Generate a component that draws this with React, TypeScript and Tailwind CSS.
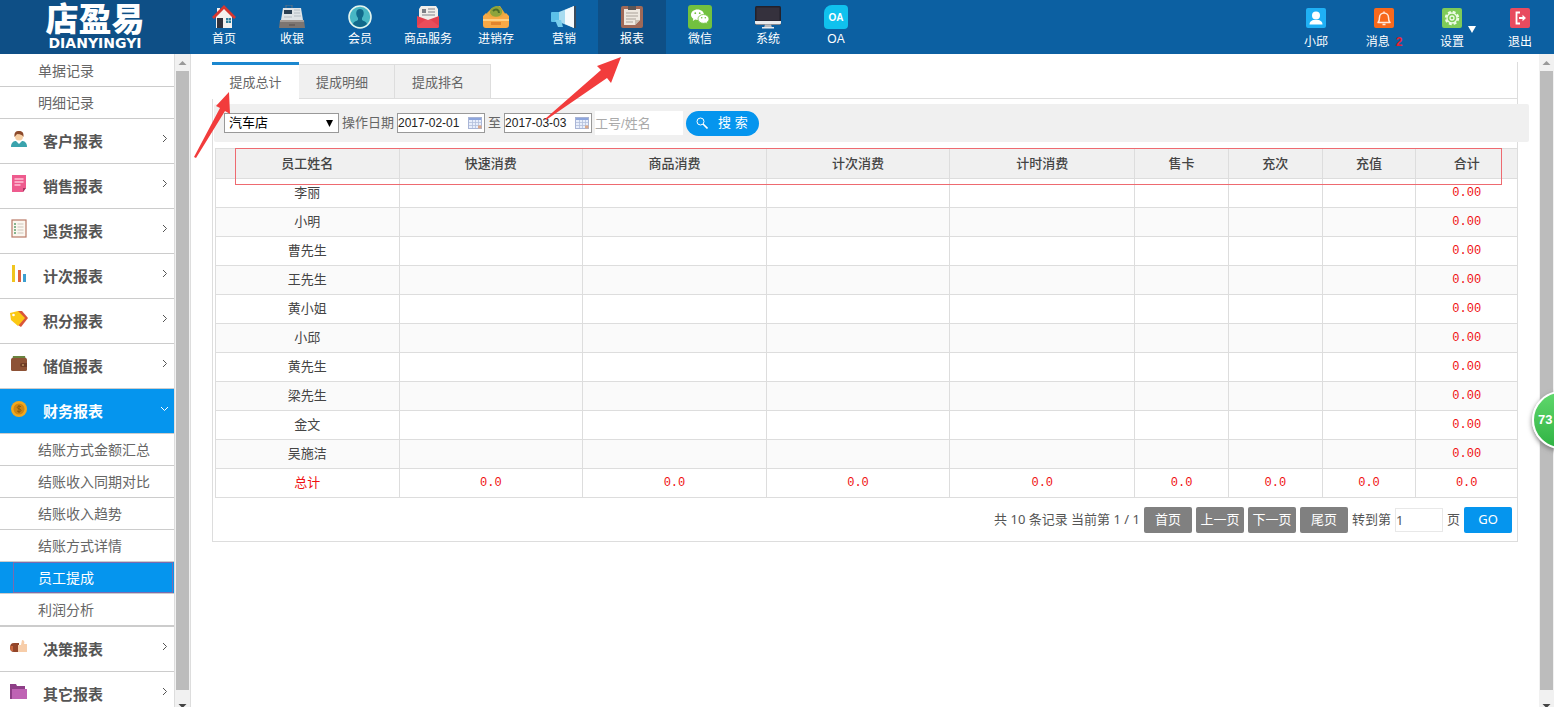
import { useState } from "react";
import type { ReactNode } from "react";
import clsx from "clsx";

const HomeIcon = () => (
  <svg width="24" height="24" viewBox="0 0 24 24">
    <path d="M4 11 12 3l8 8v12H4z" fill="#f4f1ee" />
    <path d="M5 3h3v6H5z" fill="#f4f1ee" />
    <path d="M12 0 0 12l2 2L12 4l10 10 2-2z" fill="#d5362f" />
    <path d="M5 13h6v10H5z" fill="#32323c" />
    <path d="M14 13h5v5h-5z" fill="#2f7f9c" />
    <path d="M14 15.5h5M16.5 13v5" stroke="#bfe0ea" strokeWidth=".6" />
  </svg>
);

const CashIcon = () => (
  <svg width="26" height="24" viewBox="0 0 26 24">
    <path d="M7 3V0h6v3" fill="none" stroke="#5d7184" strokeWidth="1" />
    <path d="M4 3h18l2 12H2z" fill="#dfe3e6" />
    <path d="M5 5h8v4H5z" fill="#2c3f52" />
    <path d="M15 5h6M15 8h6M15 11h7M5 12h8" stroke="#b4bcc2" strokeWidth="1.2" />
    <path d="M1 15h24l1 8H0z" fill="#7c7571" />
    <path d="M1 15h24v2H1z" fill="#a39c97" />
    <path d="M10 20h6" stroke="#554f4c" />
  </svg>
);

const MemberIcon = () => (
  <svg width="24" height="24" viewBox="0 0 24 24">
    <circle cx="12" cy="12" r="11" fill="#48b7c4" stroke="#e2f4ee" strokeWidth="1.6" />
    <path d="M5 19c1-3 4-3 5-4V13c-3-4-2-9 2-9s5 5 2 9v2c1 1 4 1 5 4-4 4-10 4-14 0z" fill="#11698b" />
  </svg>
);

const GoodsIcon = () => (
  <svg width="24" height="24" viewBox="0 0 24 24">
    <path d="M5 1h15l2 3v11H3V4z" fill="#f1eeea" />
    <path d="M6 4h4v4H6z" fill="#7c7f86" />
    <path d="M12 4h7M12 7h7M6 10h13" stroke="#a7a8ac" strokeWidth="1.3" />
    <path d="M1 11l11 4 11-4v10a2 2 0 0 1-2 2H3a2 2 0 0 1-2-2z" fill="#e3404f" />
    <path d="M1 21l8-6h6l8 6a2 2 0 0 1-2 2H3a2 2 0 0 1-2-2z" fill="#ea4d5b" />
  </svg>
);

const StockIcon = () => (
  <svg width="26" height="24" viewBox="0 0 26 24">
    <path d="M4 8 9 3l8-2 6 9-4 6H5z" fill="#e9a93b" />
    <path d="M7 8c0-5 4-7 7-7s6 3 5 7-9 6-12 0z" fill="#8ea43c" />
    <path d="M10 6c3-3 6-1 6 2" fill="none" stroke="#4c6c28" strokeWidth="2" />
    <path d="M0 11l3-3 5 4h10l5-4 3 3v9a3 3 0 0 1-3 3H3a3 3 0 0 1-3-3z" fill="#f7a946" />
    <path d="M0 15h26" stroke="#ffd083" strokeWidth="2" />
    <path d="M8 17h10v3H8z" fill="#e2852d" />
  </svg>
);

const MarketIcon = () => (
  <svg width="26" height="24" viewBox="0 0 26 24">
    <path d="M1 7h8v10H1a1 1 0 0 1-1-1V8a1 1 0 0 1 1-1z" fill="#5cc0e8" />
    <path d="M8 7 23 1v22L8 17z" fill="#a9dcf0" />
    <path d="M14 5l9-4v22l-9-4z" fill="#f6fafc" />
    <path d="M4 15h6l2 7H7z" fill="#79cdec" />
    <path d="M23 1h2v22h-2z" fill="#3b4b5b" />
  </svg>
);

const ReportIcon = () => (
  <svg width="24" height="24" viewBox="0 0 24 24">
    <rect x="1" y="1" width="22" height="22" rx="2" fill="#a06957" />
    <path d="M4 4h16v11l-5 5H4z" fill="#eee8df" />
    <path d="M20 15h-5v5z" fill="#c9bfb2" />
    <path d="M8 1h8v4H8z" fill="#5a5657" />
    <path d="M6 8h12M6 11h12M6 14h10M6 17h7" stroke="#a9a19a" strokeWidth="1.2" />
  </svg>
);

const WechatIcon = () => (
  <svg width="24" height="24" viewBox="0 0 24 24">
    <rect width="24" height="24" rx="3" fill="#72c13f" />
    <path d="M9.500 4.500c-3.800 0-6.500 2.300-6.500 5.200 0 1.700.9 3 2.300 4L4.800 16l2.500-1.400c.7.2 1.400.3 2.200.3 3.600 0 6.500-2.300 6.500-5.200s-2.900-5.200-6.500-5.200z" fill="#fff" />
    <path d="M15.500 9.500c-3.200 0-5.500 2-5.500 4.400 0 2.500 2.500 4.400 5.500 4.400.7 0 1.300-.1 1.900-.3l2 1.100-.5-1.800c1.300-.8 2.100-2 2.100-3.400 0-2.400-2.500-4.400-5.500-4.400z" fill="#fff" stroke="#72c13f" strokeWidth=".8" />
    <g fill="#72c13f">
      <circle cx="7.300" cy="8.200" r=".9" />
      <circle cx="11.700" cy="8.200" r=".9" />
      <circle cx="13.700" cy="12.800" r=".8" />
      <circle cx="17.300" cy="12.800" r=".8" />
    </g>
  </svg>
);

const SystemIcon = () => (
  <svg width="26" height="24" viewBox="0 0 26 24">
    <rect x="0" y="1" width="26" height="19" rx="1.500" fill="#23212b" />
    <rect x="1.500" y="2.500" width="23" height="13" fill="#35313d" />
    <path d="M0 16h26v2a1.500 1.500 0 0 1-1.500 1.500h-23A1.500 1.500 0 0 1 0 18z" fill="#e9ebed" />
    <path d="M10 19.500h6l1 3H9z" fill="#b5bac0" />
    <path d="M7 22h12v1.500H7z" fill="#e9ebed" />
  </svg>
);

const OaIcon = () => (
  <span className="flex h-6 w-6 items-center justify-center rounded-sm rounded-tl-lg bg-[#10c1ee] text-[10px] font-bold text-white">
    OA
  </span>
);

const UserIcon = () => (
  <svg width="20" height="20" viewBox="0 0 20 20">
    <rect width="20" height="20" rx="2" fill="#1fb0f5" />
    <circle cx="10" cy="7.500" r="4" fill="#fff" />
    <path d="M3.500 16.500c0-3 2.500-4.500 4.500-4.500h4c2 0 4.500 1.500 4.500 4.500z" fill="#fff" />
  </svg>
);

const BellIcon = () => (
  <svg width="20" height="20" viewBox="0 0 20 20">
    <rect width="20" height="20" rx="2" fill="#f8691c" />
    <path d="M4 14.500h12c-1.500-1.300-1.500-2.500-1.500-5a4.500 4.500 0 0 0-9 0c0 2.500 0 3.700-1.500 5zM10 5V3.500M8.500 16.500h3" fill="none" stroke="#ffe9dc" strokeWidth="1.500" strokeLinejoin="round" />
  </svg>
);

const GearIcon = () => (
  <svg width="20" height="20" viewBox="0 0 20 20">
    <rect width="20" height="20" rx="2" fill="#7fcb58" />
    <circle cx="10" cy="10" r="6.200" fill="none" stroke="#eefbe6" strokeWidth="2" strokeDasharray="2.900 1.970" />
    <circle cx="10" cy="10" r="5" fill="none" stroke="#eefbe6" strokeWidth="1.300" />
    <circle cx="10" cy="10" r="2" fill="none" stroke="#eefbe6" strokeWidth="1.300" />
  </svg>
);

const ExitIcon = () => (
  <svg width="20" height="20" viewBox="0 0 20 20">
    <rect width="20" height="20" rx="2" fill="#e84b5f" />
    <path d="M10 4.500H6.500v11H10" fill="none" stroke="#fff" strokeWidth="1.800" />
    <path d="M9 9h3.500V6.800L16 10l-3.500 3.200V11H9z" fill="#fff" />
  </svg>
);

const CustomerIcon = () => (
  <svg width="18" height="18" viewBox="0 0 18 18">
    <path d="M1 17c0-5 3-6 5-6h6c2 0 5 1 5 6z" fill="#3aa3ad" />
    <path d="M6 11l3 3 3-3z" fill="#fff" />
    <circle cx="9" cy="6.500" r="4" fill="#f6cfa4" />
    <path d="M4.500 7C4 2 6 1 9 1s5 1.500 4.500 6C12 4 10 5 8 4c-2 0-2 2-3.500 3z" fill="#8c4a2b" />
  </svg>
);

const SalesIcon = () => (
  <svg width="18" height="20" viewBox="0 0 18 20">
    <path d="M2 1h14v13l-3 4H2z" fill="#ee5b8e" />
    <path d="M16 14h-3v4z" fill="#a63561" />
    <path d="M4.500 5h9M4.500 8h9M4.500 11h6" stroke="#ffc3d8" strokeWidth="1.300" />
  </svg>
);

const ReturnIcon = () => (
  <svg width="18" height="20" viewBox="0 0 18 20">
    <rect x="2" y="1" width="14" height="17" fill="#fbf7f0" stroke="#b97a67" strokeWidth="1.200" />
    <path d="M4 5h2M4 8h2M4 11h2M4 14h2" stroke="#5fa06d" strokeWidth="1.400" />
    <path d="M7.500 5h6M7.500 8h6M7.500 11h6M7.500 14h6" stroke="#ccc5bb" />
  </svg>
);

const BarsIcon = () => (
  <svg width="18" height="18" viewBox="0 0 18 18">
    <path d="M2 0h3v17H2z" fill="#f0c51f" />
    <path d="M8 5h3v12H8z" fill="#e0603f" />
    <path d="M13 9h3v8h-3z" fill="#3d9fd0" />
  </svg>
);

const TagIcon = () => (
  <svg width="20" height="18" viewBox="0 0 20 18">
    <path d="M9 1h4l6 7-7 9-3-2z" fill="#d9553a" />
    <path d="M1 3 9 1l7 7-7 8-7-6z" fill="#fbc813" />
    <circle cx="4.500" cy="5" r="1.300" fill="#fff" />
  </svg>
);

const WalletIcon = () => (
  <svg width="18" height="18" viewBox="0 0 18 18">
    <path d="M3 1h12l1 4H2z" fill="#69833f" />
    <rect x="1" y="3" width="16" height="13" rx="1.500" fill="#8d5235" />
    <path d="M12 8h5v4h-5a2 2 0 0 1 0-4z" fill="#6f3c26" />
    <circle cx="13" cy="10" r=".8" fill="#f2d08a" />
  </svg>
);

const CoinIcon = () => (
  <svg width="18" height="18" viewBox="0 0 18 18">
    <circle cx="9" cy="9" r="8" fill="#f2a81e" />
    <circle cx="9" cy="9" r="5.500" fill="#cf8613" />
    <path d="M11 6.800c-1-1-3.700-.8-3.700.7 0 1.800 3.700 1 3.700 2.900 0 1.600-3 1.600-4 .5M9 5v8" fill="none" stroke="#8f5a0d" />
  </svg>
);

const DecisionIcon = () => (
  <svg width="20" height="18" viewBox="0 0 20 18">
    <path d="M10 5H5C2 5 1 7 1 9.500S2 14 5 14h5z" fill="#93452a" />
    <path d="M9 7h3l1-5c2 0 3 2 2 4h3v8H9z" fill="#f7cda9" />
    <path d="M1 8h3v5H2z" fill="#c9683f" />
  </svg>
);

const FolderIcon = () => (
  <svg width="20" height="18" viewBox="0 0 20 18">
    <path d="M1 1h6l1 2h8v3H1z" fill="#8e3f87" />
    <path d="M1 4h2v12H1z" fill="#8e3f87" />
    <path d="M3 6h15v10H3z" fill="#bf63b4" />
  </svg>
);

const navItems = [
  { label: "首页", icon: <HomeIcon /> },
  { label: "收银", icon: <CashIcon /> },
  { label: "会员", icon: <MemberIcon /> },
  { label: "商品服务", icon: <GoodsIcon /> },
  { label: "进销存", icon: <StockIcon /> },
  { label: "营销", icon: <MarketIcon /> },
  { label: "报表", icon: <ReportIcon /> },
  { label: "微信", icon: <WechatIcon /> },
  { label: "系统", icon: <SystemIcon /> },
  { label: "OA", icon: <OaIcon /> },
];

const userItems = [
  { label: "小邱", icon: <UserIcon /> },
  { label: "消息", icon: <BellIcon />, count: 2 },
  { label: "设置", icon: <GearIcon />, menu: true },
  { label: "退出", icon: <ExitIcon /> },
];

type Group = { label: string; icon: ReactNode; children?: string[] };

const groups: Group[] = [
  { label: "客户报表", icon: <CustomerIcon /> },
  { label: "销售报表", icon: <SalesIcon /> },
  { label: "退货报表", icon: <ReturnIcon /> },
  { label: "计次报表", icon: <BarsIcon /> },
  { label: "积分报表", icon: <TagIcon /> },
  { label: "储值报表", icon: <WalletIcon /> },
  {
    label: "财务报表",
    icon: <CoinIcon />,
    children: ["结账方式金额汇总", "结账收入同期对比", "结账收入趋势", "结账方式详情", "员工提成", "利润分析"],
  },
  { label: "决策报表", icon: <DecisionIcon /> },
  { label: "其它报表", icon: <FolderIcon /> },
];

const tabs = ["提成总计", "提成明细", "提成排名"];
const columns = ["员工姓名", "快速消费", "商品消费", "计次消费", "计时消费", "售卡", "充次", "充值", "合计"];
const employees = ["李丽", "小明", "曹先生", "王先生", "黄小姐", "小邱", "黄先生", "梁先生", "金文", "吴施洁"];

const SubLink = ({ label, active }: { label: string; active?: boolean }) => (
  <a
    href="#"
    className={clsx(
      "relative flex h-8 items-center border-b border-[#ccc] pl-[38px] text-sm",
      active ? "bg-[#0595ee] text-white" : "text-[#666]"
    )}
  >
    {label}
    {active && <span className="absolute inset-y-0 right-px left-[13px] border border-[#7a6bb0]" />}
  </a>
);

const ScrollBar = () => (
  <div className="flex w-[15px] shrink-0 flex-col items-center bg-[#f1f1f1]">
    <svg width="15" height="17" viewBox="0 0 15 17" className="shrink-0">
      <path d="M3.500 11 7.500 7l4 4z" fill="#999" />
    </svg>
    <div className="w-[13px] flex-1 bg-[#bcbcbc]" />
    <svg width="15" height="17" viewBox="0 0 15 17" className="shrink-0">
      <path d="M3.500 14h8l-4 4z" fill="#444" />
    </svg>
  </div>
);

const DateInput = ({ label, value }: { label: string; value: string }) => (
  <span className="relative">
    <input
      aria-label={label}
      defaultValue={value}
      className="block h-5 w-[88px] border border-[#999] bg-white font-['Liberation_Sans',sans-serif] text-xs text-[#222]"
    />
    <svg width="14" height="12" viewBox="0 0 14 12" className="absolute top-1 right-[3px]">
      <rect x=".5" y=".5" width="13" height="11" fill="#e8eefb" stroke="#a9b5d6" />
      <path d="M1 1h12v2H1z" fill="#8ea6dd" />
      <path d="M1 5.500h12M1 8.500h12M4.500 3v8M7.500 3v8M10.500 3v8" stroke="#b3bfdc" strokeWidth=".8" />
      <path d="M10 8.500h3.500v3H10z" fill="#dba98a" />
    </svg>
  </span>
);

const PageButton = ({ children }: { children: ReactNode }) => (
  <button className="h-[26px] w-12 rounded-xs bg-[#808080] text-[13px] text-white">{children}</button>
);

const Header = () => (
  <header className="flex h-[54px] shrink-0 bg-[#0c60a2] text-white">
    <a href="#" className="flex w-[190px] shrink-0 flex-col items-center bg-[#0e4f86] pt-1">
      <span className="text-[33px] leading-8 font-black">店盈易</span>
      <span className="font-['DejaVu_Sans',sans-serif] text-sm leading-[14px] font-bold">DIANYINGYI</span>
    </a>
    <nav className="flex flex-1">
      {navItems.map((item) => (
        <a
          key={item.label}
          href="#"
          className={clsx("flex w-[68px] flex-col items-center pt-[5px]", item.label === "报表" && "bg-[#0e4f86]")}
        >
          {item.icon}
          <span className="text-xs leading-5">{item.label}</span>
        </a>
      ))}
    </nav>
    <div className="flex">
      {userItems.map((item) => (
        <a key={item.label} href="#" className="relative flex w-[68px] flex-col items-center gap-1 pt-2">
          {item.icon}
          <span className="text-xs leading-5">
            {item.label}
            {item.count && <span className="ml-[6px] font-bold text-[#e8202f]">{item.count}</span>}
          </span>
          {item.menu && (
            <svg width="8" height="8" viewBox="0 0 8 8" className="absolute top-[25px] right-[10px]">
              <path d="M0 1h8L4 8z" fill="#fff" />
            </svg>
          )}
        </a>
      ))}
    </div>
  </header>
);

const Sidebar = () => (
  <aside className="flex w-[191px] shrink-0 border-r border-[#ddd]">
    <nav className="min-w-0 flex-1 overflow-hidden border-r border-[#ddd] pt-px">
      <SubLink label="单据记录" />
      <SubLink label="明细记录" />
      {groups.map((group) => (
        <div key={group.label}>
          <a
            href="#"
            className={clsx(
              "flex h-[45px] items-center border-b border-[#ccc] pr-[5px] pl-[9px] text-[15px] font-bold",
              group.children ? "bg-[#0595ee] text-white" : "text-[#555]"
            )}
          >
            <span className="mb-1 flex w-5 justify-center">{group.icon}</span>
            <span className="mt-[2px] ml-[14px] flex-1">{group.label}</span>
            <svg width="9" height="9" viewBox="0 0 9 9" className="mb-[6px]" fill="none" stroke="currentColor" strokeWidth="1">
              <path d={group.children ? "M1 3l3.500 3.500L8 3" : "M3 1l3.500 3.500L3 8"} />
            </svg>
          </a>
          {group.children && (
            <div className="border-b border-[#ccc]">
              {group.children.map((child) => (
                <SubLink key={child} label={child} active={child === "员工提成"} />
              ))}
            </div>
          )}
        </div>
      ))}
    </nav>
    <ScrollBar />
  </aside>
);

const ReportTable = () => (
  <div className="relative -mr-px ml-[2px]">
    <table className="w-full table-fixed border-collapse text-center text-[13px] text-[#444]">
      <colgroup>
        <col className="w-[14.1%]" />
        <col className="w-[14.1%]" />
        <col className="w-[14.1%]" />
        <col className="w-[14.1%]" />
        <col className="w-[14.2%]" />
        <col className="w-[7.2%]" />
        <col className="w-[7.2%]" />
        <col className="w-[7.2%]" />
        <col />
      </colgroup>
      <thead>
        <tr className="h-[30px] bg-[#f0f0f0]">
          {columns.map((column) => (
            <th key={column} className="border border-[#ddd] p-0 font-medium">{column}</th>
          ))}
        </tr>
      </thead>
      <tbody>
        {employees.map((name) => (
          <tr key={name} className="h-[29px] even:bg-[#fafafa]">
            <td className="border border-[#ddd] p-0">{name}</td>
            {columns.slice(2).map((column) => (
              <td key={column} className="border border-[#ddd] p-0" />
            ))}
            <td className="border border-[#ddd] p-0 font-['Liberation_Mono',monospace] text-xs text-[#f01010]">0.00</td>
          </tr>
        ))}
        <tr className="h-[29px] text-[#f01010]">
          <td className="border border-[#ddd] p-0">总计</td>
          {columns.slice(1).map((column) => (
            <td key={column} className="border border-[#ddd] p-0 font-['Liberation_Mono',monospace] text-xs">0.0</td>
          ))}
        </tr>
      </tbody>
    </table>
    {/* Highlight around the column headings */}
    <div className="pointer-events-none absolute top-0 right-4 left-5 h-[37px] border border-[#ee6a70]" />
  </div>
);

const App = () => {
  const [tab, setTab] = useState(tabs[0]);

  return (
    <div className="relative flex h-screen flex-col overflow-hidden bg-white font-['Liberation_Sans','Noto_Sans_CJK_SC',sans-serif]">
      <Header />
      <div className="flex min-h-0 flex-1">
        <Sidebar />
        <main className="min-w-0 flex-1 pt-2 pr-[21px] pl-[21px]">
          <div className="border-x border-b border-[#ddd]">
            {/* Tabs */}
            <div className="flex h-[37px] items-end border-b border-[#ddd]">
              {tabs.map((name) => (
                <button
                  key={name}
                  onClick={() => setTab(name)}
                  className={clsx(
                    "-mb-px pt-[2px] text-[13px] text-[#666]",
                    name === tab
                      ? "-ml-px h-[37px] w-[87px] border-t-[3px] border-[#1b87cf] bg-white"
                      : "h-[35px] w-24 border-t border-r border-b border-[#ddd] bg-[#f0f0f0] pr-[9px]"
                  )}
                >
                  {name}
                </button>
              ))}
            </div>

            {/* Filter bar */}
            <form className="mt-[5px] -mr-3 mb-[6px] ml-px flex h-[38px] items-center gap-[3px] rounded-xs bg-[#f0f0f0] pl-[10px] text-[13px] text-[#666]">
              <span className="relative">
                <select aria-label="店铺" className="block h-5 w-[115px] appearance-none border border-[#999] bg-white pl-1 text-[13px] leading-4 text-black">
                  <option>汽车店</option>
                </select>
                <svg width="7" height="7" viewBox="0 0 7 7" className="pointer-events-none absolute top-[7px] right-[6px]">
                  <path d="M0 0h7L3.500 7z" />
                </svg>
              </span>
              <span>操作日期</span>
              <DateInput label="开始日期" value="2017-02-01" />
              <span>至</span>
              <DateInput label="结束日期" value="2017-03-03" />
              <input aria-label="工号/姓名" placeholder="工号/姓名" className="h-6 w-[88px] bg-white text-[13px] placeholder:text-[#aaa]" />
              <button type="button" className="flex h-[25px] w-[73px] items-center rounded-full bg-[#0595ee] pl-[10px] text-[13px] text-white">
                <svg width="12" height="12" viewBox="0 0 12 12" fill="none" stroke="#fff">
                  <circle cx="4.500" cy="4.500" r="3.500" />
                  <path d="M7 7l4.500 4.500" strokeWidth="1.600" />
                </svg>
                <span className="ml-[10px]">搜 索</span>
              </button>
            </form>

            <ReportTable />

            {/* Pagination */}
            <div className="flex h-[43px] items-center justify-end gap-1 pr-[5px] font-['Noto_Sans','Noto_Sans_CJK_SC',sans-serif] text-[13px] text-[#555]">
              <span>共 10 条记录 当前第 1 / 1</span>
              <PageButton>首页</PageButton>
              <PageButton>上一页</PageButton>
              <PageButton>下一页</PageButton>
              <PageButton>尾页</PageButton>
              <label htmlFor="page">转到第</label>
              <input id="page" defaultValue="1" className="h-6 w-12 border border-[#e8e8e8] text-[13px]" />
              <span>页</span>
              <button className="h-[26px] w-12 rounded-xs bg-[#0595ee] text-[13px] text-white">GO</button>
            </div>
          </div>
        </main>
        <ScrollBar />
      </div>

      {/* Pointers to the current tab and menu entry */}
      <svg width="640" height="170" viewBox="0 0 640 170" className="pointer-events-none absolute top-0 left-0" fill="#f23c3c">
        <path d="M229 92 216 106l4 2-26 49 2 1 29-47 5 3z" />
        <path d="M621 57 597 66l4 4-56 49 1 1 61-42 4 5z" />
      </svg>

      <div className="absolute top-[391px] -right-9 flex h-[58px] w-[58px] items-center rounded-full border-2 border-white bg-linear-to-b from-[#5fd86c] to-[#2fb344] pl-1 text-[13px] font-bold text-white shadow-[0_2px_5px_#777]">
        73
      </div>
    </div>
  );
};

export default App;
